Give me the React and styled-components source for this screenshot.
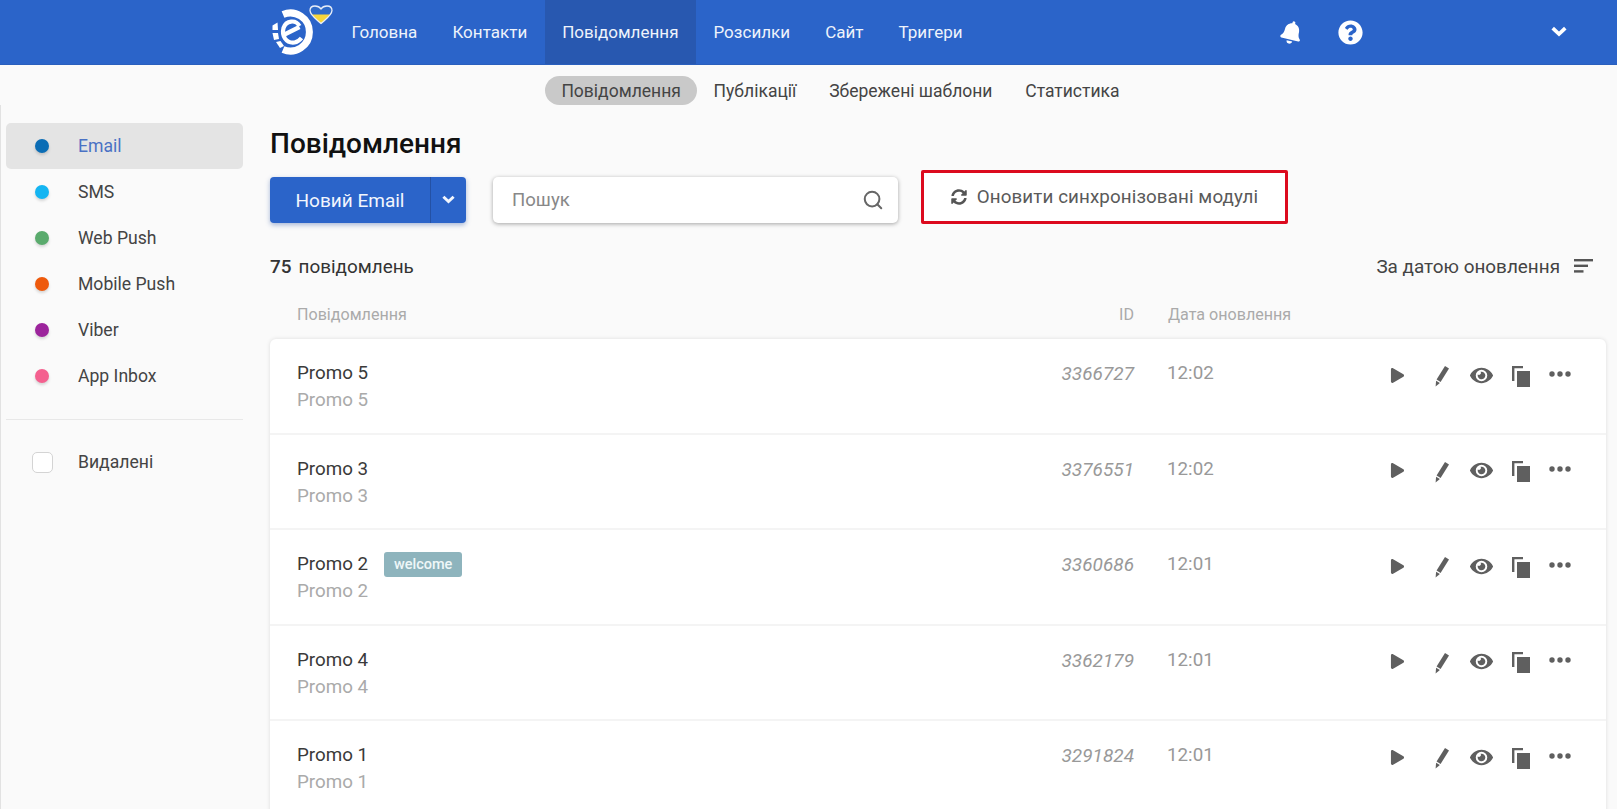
import React from 'react';
import styled, { createGlobalStyle } from 'styled-components';
import { FaBell, FaQuestionCircle, FaPlay, FaEye, FaSyncAlt } from 'react-icons/fa';
import { Search as SearchIcon } from 'lucide-react';

const Global = createGlobalStyle`
  html, body { margin: 0; padding: 0; background: #fafafa; }
  body { font-family: Roboto, "Noto Sans", sans-serif; color: #333; overflow: hidden; }
  * { box-sizing: border-box; }
`;
const Page = styled.div`width: 1617px; height: 809px; overflow: hidden; display: flex; flex-direction: column;`;
const Header = styled.header`height: 65px; flex: none; background: #2b64c9; display: flex; align-items: stretch; padding-left: 270px; border-bottom: 1px solid #2a5fbd;`;
const LogoBox = styled.div`width: 64px; flex: none; display: flex; align-items: center;`;
const NavItem = styled.a`
  display: flex; align-items: center; padding: 0 17.5px; color: #eef3fb; font-size: 17px; letter-spacing: .02px;
  background: ${p => p.$active ? '#2858b0' : 'transparent'};
`;
const HeaderIcons = styled.div`margin-left: auto; display: flex; align-items: center; color: #fff; padding-right: 50px;`;
const BellWrap = styled.span`display: flex; transform: rotate(14deg); margin-right: 35px; font-size: 23px;`;
const HelpWrap = styled.span`display: flex; font-size: 25px; margin-right: 188px;`;
const ChevWrap = styled.span`display: flex;`;
const SubNav = styled.nav`height: 40px; flex: none; display: flex; align-items: center; padding: 11px 0 0 545px; font-size: 17.5px; color: #444;`;
const SubItem = styled.a`
  height: 29px; display: flex; align-items: center; padding: 0 16.4px; border-radius: 15px;
  background: ${p => p.$active ? '#c9c9c9' : 'transparent'};
`;
const Body = styled.div`flex: 1; display: flex; min-height: 0; border-left: 1px solid #e2e2e2;`;
const Side = styled.aside`width: 269px; flex: none; padding: 18px 0 0 5px;`;
const SideInner = styled.div`width: 237px;`;
const SideItem = styled.div`
  height: 45.5px; margin-bottom: .5px; display: flex; align-items: center; border-radius: 5px; font-size: 17.6px; color: ${p => p.$active ? '#4a72c4' : '#444'};
  background: ${p => p.$active ? '#e4e4e4' : 'transparent'};
`;
const Dot = styled.span`width: 14px; height: 14px; border-radius: 50%; margin: 0 29px 0 29px; flex: none; background: ${p => p.$c}; box-shadow: 0 2px 3px rgba(0,0,0,.15);`;
const Divider = styled.div`height: 1px; background: #e8e8e8; margin: 20px 0 20px;`;
const CheckBox = styled.span`width: 21px; height: 21px; flex: none; border: 1px solid #d4d4d4; border-radius: 5px; background: #fff; margin: 0 25px 0 26px;`;
const Main = styled.main`flex: 1; min-width: 0; padding-right: 11px;`;
const Title = styled.h1`margin: 24px 0 0; font-size: 28px; line-height: 30px; font-weight: 500; color: #111;`;
const Toolbar = styled.div`display: flex; align-items: center; margin-top: 18px; height: 46px;`;
const Primary = styled.div`width: 196px; height: 46px; flex: none; display: flex; border-radius: 4px; background: #2b64c9; color: #f2f6fd; box-shadow: 0 2px 5px rgba(40,80,160,.4); font-size: 19px;`;
const PrimaryLabel = styled.div`width: 161px; display: flex; align-items: center; justify-content: center; border-right: 1px solid #2451a4;`;
const PrimaryArrow = styled.div`flex: 1; display: flex; align-items: center; justify-content: center;`;
const Search = styled.div`width: 405px; height: 46px; flex: none; margin-left: 27px; display: flex; align-items: center; justify-content: space-between; padding: 0 14px 0 19px; background: #fff; border-radius: 5px; box-shadow: 0 1px 4px rgba(0,0,0,.35); font-size: 18.6px; color: #888; svg { color: #666; }`;
const SyncButton = styled.button`width: 367px; height: 54px; flex: none; margin: 0 0 6px 23px; display: flex; align-items: center; justify-content: center; gap: 10px; background: #fff; border: 3px solid #dc0a1e; border-radius: 2px; color: #5a5a5a; font: 400 18.8px Roboto, sans-serif; letter-spacing: .1px; svg { font-size: 16px; color: #555; }`;
const CountRow = styled.div`display: flex; justify-content: space-between; align-items: center; margin-top: 31px; height: 24px; font-size: 18.9px; color: #333;`;
const Count = styled.div`b { font-weight: 500; margin-right: 7px; }`;
const Sort = styled.div`display: flex; align-items: center; gap: 14px; color: #444; margin-right: 13px;`;
const TableHead = styled.div`display: grid; grid-template-columns: 27px 1fr 64px 34px 438px; margin-top: 24px; height: 24px; align-items: center; font-size: 16.1px; color: #aaa;`;
const HeadName = styled.div`grid-column: 2;`;
const Right = styled.div`text-align: right;`;
const Card = styled.div`margin-top: 13px; background: #fff; border-radius: 6px 6px 0 0; box-shadow: 0 0 4px rgba(0,0,0,.12);`;
const Row = styled.div`height: 95.5px; display: grid; grid-template-columns: 27px 1fr 64px 33px 190px 249px; border-bottom: 2px solid #f4f4f4; padding-top: 21px; font-size: 18.8px; line-height: 27px;`;
const Names = styled.div`grid-column: 2;`;
const NameLine = styled.div`display: flex; align-items: center; color: #3a3a3a;`;
const SubName = styled.div`color: #aaa;`;
const Tag = styled.span`margin-left: 16px; height: 25px; width: 78px; display: flex; align-items: center; justify-content: center; border-radius: 3px; background: #8eb4bd; color: #eef7f8; font-size: 14.5px; font-weight: 500;`;
const RowId = styled.div`grid-column: 3; margin-left: -60px; text-align: right; font-style: italic; color: #999; font-size: 19px;`;
const RowDate = styled.div`grid-column: 5; color: #999;`;
const Actions = styled.div`grid-column: 6; display: flex; justify-content: flex-end; height: 27px; margin-right: 26px; color: #5f5f5f;`;
const Action = styled.span`width: 39.5px; display: flex; align-items: center; justify-content: center; padding-top: ${p => p.$t ?? 3}px; margin-right: ${p => p.$r || 0}px;`;

const HEART = 'M51 23.5 C46 19 40 15 40 10.5 C40 7 43 6 45 6 C48 6 50 7.5 51 9 C52 7.5 54 6 57 6 C59 6 62 7 62 10.5 C62 15 56 19 51 23.5z';
const Logo = () => (
  <svg width="64" height="64" viewBox="0 0 64 64">
    <defs><clipPath id="heart-low"><rect x="36" y="14.5" width="30" height="12" /></clipPath></defs>
    <path d="M13 14.5 A19 19 0 1 1 13 49.5" fill="none" stroke="#fff" strokeWidth="7" />
    <path d="M29.5 26 C26 19.5 16 20 13.5 28 C11.5 36 16 43.5 24.5 42.5 C27.5 42 29.5 40.5 31.5 38" fill="none" stroke="#fff" strokeWidth="4.2" />
    <path d="M13.5 35 L29.5 27" fill="none" stroke="#fff" strokeWidth="4.2" />
    <path d="M2.5 25.5 L7.5 22.5 L8 30 L2.5 30z" fill="#fff" />
    <path d="M2.5 33 L8 33 L9 39 L4 40z" fill="#fff" />
    <path d="M6 42 L10.5 41 L14 46 L10 48z" fill="#fff" />
    <path d={HEART} fill="#2f6bc9" />
    <path d={HEART} fill="#f7d63a" clipPath="url(#heart-low)" />
    <path d={HEART} fill="none" stroke="#e9eef8" strokeWidth="1.3" />
  </svg>
);
const Chevron = ({ w = 15 }) => (
  <svg width={w} height={w * 0.7} viewBox="0 0 15 10.5" fill="none" stroke="currentColor" strokeWidth="3.4">
    <path d="M1.6 2 L7.5 7.6 L13.4 2" />
  </svg>
);
const Pencil = () => (
  <svg width="16" height="22" viewBox="0 0 16 22" fill="currentColor">
    <path d="M11 1 L15 3.4 L6.6 17 L2.6 14.6z" />
    <path d="M2.1 15.8 L5.9 18.1 L1.6 21.5z" />
  </svg>
);
const CopyIcon = () => (
  <svg width="18" height="21" viewBox="0 0 18 21" fill="currentColor">
    <path d="M0 0h11v2.2H2.4V15H0z" /><rect x="5" y="5" width="13" height="16" />
  </svg>
);
const Dots = () => (
  <svg width="22" height="6" viewBox="0 0 22 6" fill="currentColor">
    <circle cx="3" cy="3" r="2.7" /><circle cx="11" cy="3" r="2.7" /><circle cx="19" cy="3" r="2.7" />
  </svg>
);
const SortIcon = () => (
  <svg width="19" height="14" viewBox="0 0 19 14" fill="#555">
    <rect width="19" height="2.4" /><rect y="5.6" width="14" height="2.4" /><rect y="11.2" width="9.5" height="2.4" />
  </svg>
);

const sides = [['Email', '#0b6db5'], ['SMS', '#14b5f2'], ['Web Push', '#5aab6d'], ['Mobile Push', '#ee5a0c'], ['Viber', '#9c249c'], ['App Inbox', '#f4608f']];
const rows = [['Promo 5', '3366727', '12:02'], ['Promo 3', '3376551', '12:02'], ['Promo 2', '3360686', '12:01', 'welcome'], ['Promo 4', '3362179', '12:01'], ['Promo 1', '3291824', '12:01']];

export default function App() {
  return (
    <Page>
      <Global />
      <Header>
        <LogoBox><Logo /></LogoBox>
        {['Головна', 'Контакти', 'Повідомлення', 'Розсилки', 'Сайт', 'Тригери'].map((t, i) => <NavItem key={t} $active={i === 2}>{t}</NavItem>)}
        <HeaderIcons>
          <BellWrap><FaBell /></BellWrap>
          <HelpWrap><FaQuestionCircle /></HelpWrap>
          <ChevWrap><Chevron w={16} /></ChevWrap>
        </HeaderIcons>
      </Header>
      <SubNav>
        <SubItem $active>Повідомлення</SubItem>
        <SubItem>Публікації</SubItem>
        <SubItem>Збережені шаблони</SubItem>
        <SubItem>Статистика</SubItem>
      </SubNav>
      <Body>
        <Side>
          <SideInner>
            {sides.map(([t, c], i) => <SideItem key={t} $active={i === 0}><Dot $c={c} />{t}</SideItem>)}
            <Divider />
            <SideItem><CheckBox />Видалені</SideItem>
          </SideInner>
        </Side>
        <Main>
          <Title>Повідомлення</Title>
          <Toolbar>
            <Primary>
              <PrimaryLabel>Новий Email</PrimaryLabel>
              <PrimaryArrow><Chevron w={13} /></PrimaryArrow>
            </Primary>
            <Search>Пошук<SearchIcon size={22} strokeWidth={2.2} /></Search>
            <SyncButton><FaSyncAlt />Оновити синхронізовані модулі</SyncButton>
          </Toolbar>
          <CountRow>
            <Count><b>75</b>повідомлень</Count>
            <Sort>За датою оновлення<SortIcon /></Sort>
          </CountRow>
          <TableHead>
            <HeadName>Повідомлення</HeadName>
            <Right>ID</Right>
            <span />
            <div>Дата оновлення</div>
          </TableHead>
          <Card>
            {rows.map(([n, id, d, tag]) => (
              <Row key={n}>
                <Names>
                  <NameLine>{n}{tag && <Tag>{tag}</Tag>}</NameLine>
                  <SubName>{n}</SubName>
                </Names>
                <RowId>{id}</RowId>
                <RowDate>{d}</RowDate>
                <Actions>
                  <Action $r={4.5}><FaPlay size={15} /></Action>
                  <Action $t={5}><Pencil /></Action>
                  <Action><FaEye size={23} /></Action>
                  <Action $t={5}><CopyIcon /></Action>
                  <Action $t={0}><Dots /></Action>
                </Actions>
              </Row>
            ))}
          </Card>
        </Main>
      </Body>
    </Page>
  );
}
